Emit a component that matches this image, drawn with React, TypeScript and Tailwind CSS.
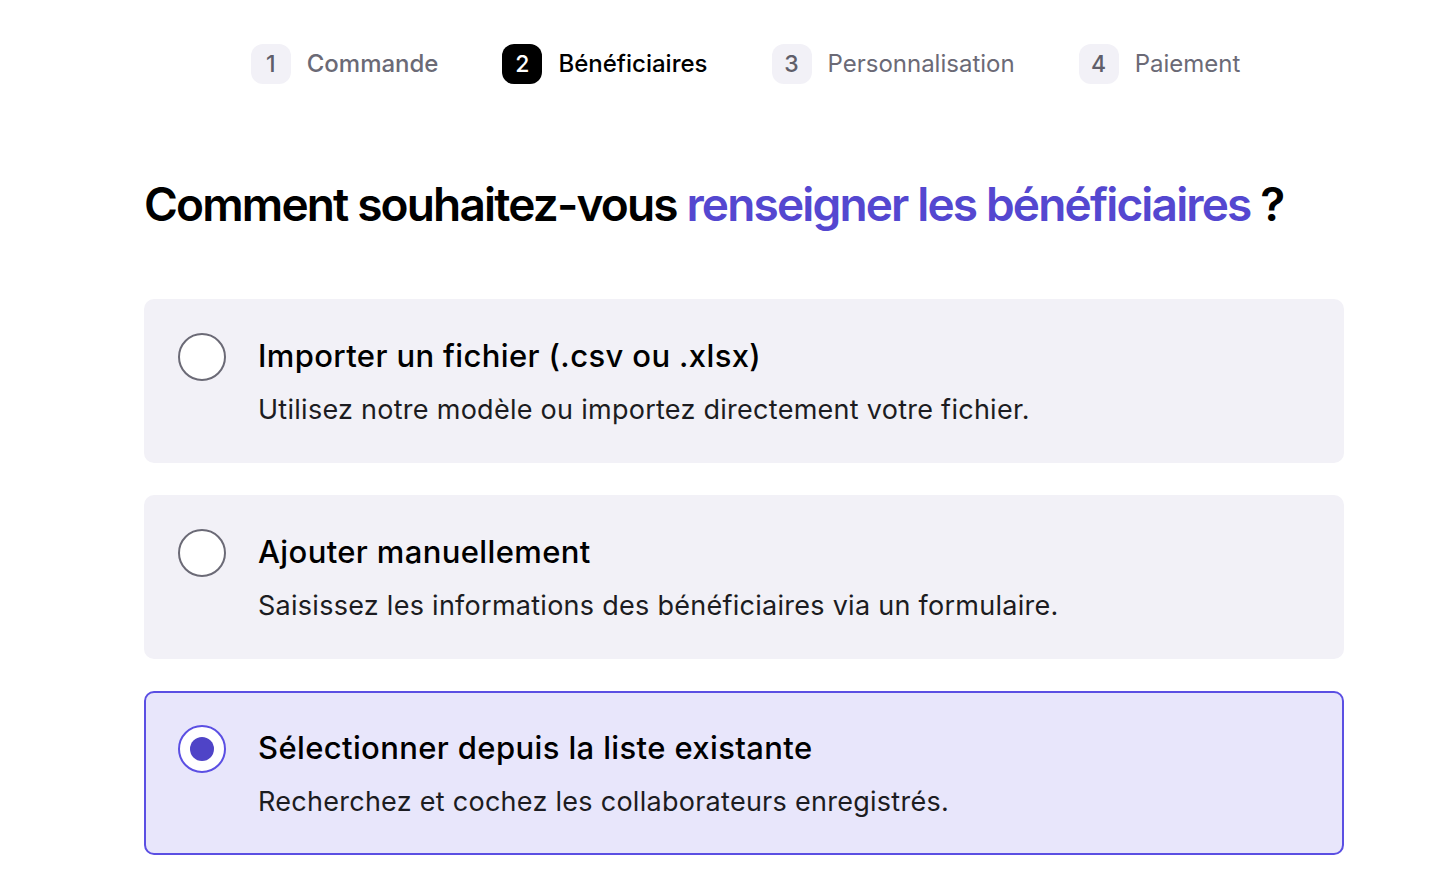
import { useState } from "react"

const steps = [
  { n: 1, label: "Commande", state: "done" },
  { n: 2, label: "Bénéficiaires", state: "current" },
  { n: 3, label: "Personnalisation", state: "todo" },
  { n: 4, label: "Paiement", state: "todo" },
]

const options = [
  {
    id: "import",
    title: "Importer un fichier (.csv ou .xlsx)",
    desc: "Utilisez notre modèle ou importez directement votre fichier.",
  },
  {
    id: "manual",
    title: "Ajouter manuellement",
    desc: "Saisissez les informations des bénéficiaires via un formulaire.",
  },
  {
    id: "list",
    title: "Sélectionner depuis la liste existante",
    desc: "Recherchez et cochez les collaborateurs enregistrés.",
  },
]

export default function App() {
  const [selected, setSelected] = useState("list")

  return (
    <div className="min-h-screen bg-white font-['Inter',sans-serif] text-black">
      <div className="ml-[144px] w-[1200px]">
        <nav className="flex justify-center gap-16 pt-11 pl-[3px]">
          {steps.map((s) => (
            <div key={s.n} className="flex items-center gap-4">
              <span
                className={
                  s.state === "current"
                    ? "flex h-10 w-10 items-center justify-center rounded-xl bg-black text-[23px] font-medium text-white"
                    : "flex h-10 w-10 items-center justify-center rounded-xl bg-[#f2f1f7] text-[23px] font-medium text-[#5f5e6a]"
                }
              >
                {s.n}
              </span>
              <span
                className={
                  s.state === "current"
                    ? "text-[24px] font-medium text-black"
                    : s.state === "done"
                      ? "text-[24px] font-medium text-[#6b6a76]"
                      : "text-[24px] text-[#6b6a76]"
                }
              >
                {s.label}
              </span>
            </div>
          ))}
        </nav>

        <main className="pt-[92px]">
          <h1 className="text-[46px] font-semibold leading-[56px] tracking-[-0.04em]">
            Comment souhaitez-vous{" "}
            <span className="text-[#5447d0]">renseigner les bénéficiaires</span> ?
          </h1>

          <div className="mt-[67px] flex flex-col gap-8">
            {options.map((o) => {
              const active = selected === o.id
              return (
                <button
                  key={o.id}
                  onClick={() => setSelected(o.id)}
                  className={
                    active
                      ? "flex h-[164px] items-start gap-8 rounded-[10px] border-2 border-[#5b4fe3] bg-[#e8e6fb] pl-[32px] pt-[32px] text-left"
                      : "flex h-[164px] items-start gap-8 rounded-[10px] border-2 border-transparent bg-[#f2f1f7] pl-[32px] pt-[32px] text-left"
                  }
                >
                  <span
                    className={
                      active
                        ? "flex h-12 w-12 shrink-0 items-center justify-center rounded-full border-2 border-[#5b4fe3] bg-white"
                        : "flex h-12 w-12 shrink-0 items-center justify-center rounded-full border-2 border-[#6b6a76] bg-white"
                    }
                  >
                    {active && <span className="h-6 w-6 rounded-full bg-[#4f44c7]" />}
                  </span>
                  <span className="flex flex-col pt-[3px]">
                    <span className="text-[31px] font-medium leading-[40px] tracking-[0.012em]">
                      {o.title}
                    </span>
                    <span className="mt-4 text-[27px] leading-[36px] tracking-[0.01em] text-[#1c1c21]">
                      {o.desc}
                    </span>
                  </span>
                </button>
              )
            })}
          </div>
        </main>
      </div>
    </div>
  )
}
